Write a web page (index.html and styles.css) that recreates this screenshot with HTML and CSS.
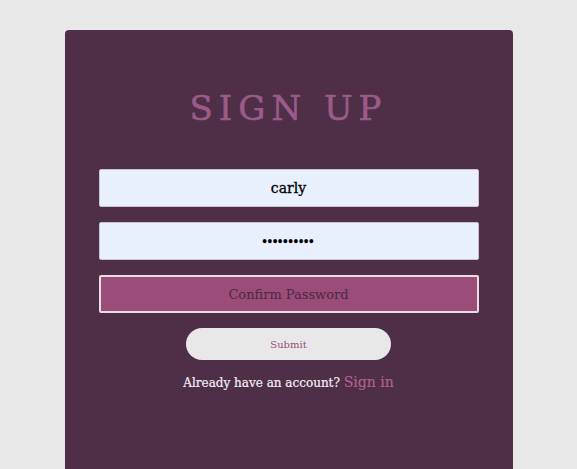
FILE: index.html
```html
<!DOCTYPE html>
<html lang="en">
<head>
<meta charset="utf-8">
<title>Sign Up</title>
<link rel="stylesheet" href="styles.css">
</head>
<body>
<div class="card">
  <h1 class="title">SIGN UP</h1>
  <form class="form">
    <input class="field field-filled" type="text" value="carly">
    <input class="field field-filled field-pass" type="password" value="1234567890">
    <input class="field field-confirm" type="password" placeholder="Confirm Password">
    <button class="submit" type="button">Submit</button>
    <p class="switch">Already have an account? <a class="switch-link" href="#">Sign in</a></p>
  </form>
</div>
</body>
</html>
```

FILE: styles.css
```css
html, body {
  margin: 0;
  padding: 0;
}
body {
  background: #e8e8e8;
  font-family: "DejaVu Serif", "Liberation Serif", serif;
  overflow: hidden;
}
.card {
  width: 380px;
  margin: 30px auto 0;
  padding: 0 34px;
  min-height: 460px;
  background: #4f2e48;
  border-radius: 4px;
  box-sizing: content-box;
}
.title {
  margin: 0;
  padding-top: 58px;
  height: 81px;
  box-sizing: border-box;
  text-align: center;
  font-weight: normal;
  font-size: 34px;
  line-height: 40px;
  letter-spacing: 6px;
  color: #9b5b88;
  -webkit-text-stroke: 0.6px #9b5b88;
}
.form {
  display: flex;
  flex-direction: column;
  align-items: center;
  padding-top: 58px;
}
.field {
  width: 380px;
  height: 38px;
  box-sizing: border-box;
  margin: 0 0 15px;
  border: 1px solid #c9c3cf;
  border-radius: 2px;
  background: #e8f0fe;
  font-family: inherit;
  font-size: 14px;
  text-align: center;
  color: #000;
  outline: none;
  padding: 0;
}
.field-filled {
  -webkit-text-stroke: 0.3px #000;
}
.field-pass {
  font-family: "Liberation Sans", sans-serif;
  font-size: 12px;
  font-weight: bold;
  letter-spacing: 1px;
}
.field-confirm {
  background: #9b4c79;
  border: 2px solid #e6dce6;
  font-size: 13px;
}
.field-confirm::placeholder {
  color: #4a2a44;
  opacity: 1;
}
.submit {
  margin-top: 0;
  width: 205px;
  height: 32px;
  border: none;
  border-radius: 16px;
  background: #e8e8e8;
  color: #9b4c79;
  font-family: inherit;
  font-size: 10px;
}
.switch {
  margin: 14px 0 0;
  font-size: 12px;
  color: #f7f0f5;
  -webkit-text-stroke: 0.2px #f7f0f5;
}
.switch-link {
  color: #b0608f;
  -webkit-text-stroke: 0.2px #b0608f;
  text-decoration: none;
  font-size: 14px;
}
```
